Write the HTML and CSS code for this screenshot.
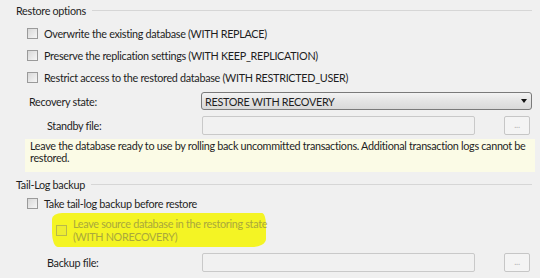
FILE: index.html
```html
<!DOCTYPE html>
<html lang="en">

<head>
    <meta charset="UTF-8">
    <title>Restore options</title>
    <link rel="stylesheet" href="styles.css">
</head>

<body>
    <div class="panel">
        <div class="group-title">
            <span>Restore options</span>
            <div class="rule"></div>
        </div>
        <div class="options">
            <div class="check"><span class="box"></span>Overwrite the existing database (WITH REPLACE)</div>
            <div class="check"><span class="box"></span>Preserve the replication settings (WITH KEEP_REPLICATION)</div>
            <div class="check"><span class="box"></span>Restrict access to the restored database (WITH RESTRICTED_USER)</div>
        </div>

        <div class="field-row recovery">
            <span class="label">Recovery state:</span>
            <div class="select">
                <span>RESTORE WITH RECOVERY</span>
                <span class="arrow"></span>
            </div>
        </div>
        <div class="field-row standby">
            <span class="label indent">Standby file:</span>
            <div class="input"></div>
            <div class="browse">...</div>
        </div>
        <div class="info">Leave the database ready to use by rolling back uncommitted transactions. Additional transaction logs cannot be restored.</div>

        <div class="group-title tail">
            <span>Tail-Log backup</span>
            <div class="rule"></div>
        </div>
        <div class="check single"><span class="box"></span>Take tail-log backup before restore</div>
        <div class="marker">
            <span class="box"></span>
            <span class="disabled">Leave source database in the restoring state<br>(WITH NORECOVERY)</span>
        </div>
        <div class="field-row backup">
            <span class="label indent">Backup file:</span>
            <div class="input"></div>
            <div class="browse">...</div>
        </div>
    </div>
</body>

</html>
```

FILE: styles.css
```css
/* General Reset */
* {
    margin: 0;
    padding: 0;
    box-sizing: border-box;
}

body {
    font-family: Lato, "Open Sans", sans-serif;
    font-size: 10.8px;
    letter-spacing: -0.3px;
    color: #1e1e1e;
    background-color: #f0f0f0;
    width: 540px;
    height: 278px;
    overflow: hidden;
}

.panel {
    padding: 0 8px 0 16px;
}

.group-title {
    display: flex;
    align-items: center;
    height: 20px;
    gap: 6px;
}

.group-title .rule {
    flex: 1;
    height: 1px;
    background-color: #d6d6d6;
}

.group-title.tail {
    margin-top: 2px;
}

.options {
    padding-top: 2px;
}

.check {
    display: flex;
    align-items: center;
    height: 22px;
    padding-left: 11px;
    white-space: nowrap;
}

.check.single {
    height: 18px;
}

.box {
    display: inline-block;
    width: 11px;
    height: 11px;
    border: 1px solid #9a9a9a;
    background: linear-gradient(135deg, #d8d8d8, #f6f6f6);
    margin-right: 6px;
    flex-shrink: 0;
}

.field-row {
    display: flex;
    align-items: center;
}

.field-row .label {
    width: 185px;
    padding-left: 13px;
}

.field-row .label.indent {
    width: 186px;
    padding-left: 31px;
}

.recovery {
    margin-top: 4px;
    height: 18px;
}

.select {
    flex: 1;
    height: 18px;
    display: flex;
    align-items: center;
    justify-content: space-between;
    padding: 0 4px 0 3px;
    border: 1px solid #7a7a7a;
    border-radius: 3px;
    background: linear-gradient(#f3f3f3, #e4e4e4 50%, #d9d9d9);
}

.arrow {
    width: 0;
    height: 0;
    border-left: 3px solid transparent;
    border-right: 3px solid transparent;
    border-top: 4px solid #111;
}

.standby,
.backup {
    height: 19px;
}

.standby {
    margin-top: 6px;
}

.input {
    width: 273px;
    height: 19px;
    border: 1px solid #c9c9c9;
    border-radius: 2px;
    background-color: #f1f1f1;
}

.browse {
    width: 26px;
    height: 19px;
    margin-left: 29px;
    border: 1px solid #c6c6c6;
    border-radius: 2px;
    background-color: #f4f4f4;
    color: #b4b4b4;
    font-size: 9px;
    text-align: center;
    line-height: 15px;
}

.info {
    margin: 4px -3px 0 9px;
    padding: 1px 5px 8px 5px;
    line-height: 12px;
    background-color: #fbfbe6;
}

.marker {
    display: flex;
    align-items: center;
    width: 214px;
    height: 34px;
    margin: 1px 0 0 36px;
    padding-left: 4px;
    background-color: #f4f424;
    border-radius: 10px 4px 14px 6px / 6px 12px 8px 14px;
    line-height: 13px;
    white-space: nowrap;
}

.marker .box {
    border-color: #b9b94a;
    background: #eded30;
}

.disabled {
    color: #a9a83c;
    margin-top: -1px;
}

.backup {
    margin-top: 6px;
}
```
